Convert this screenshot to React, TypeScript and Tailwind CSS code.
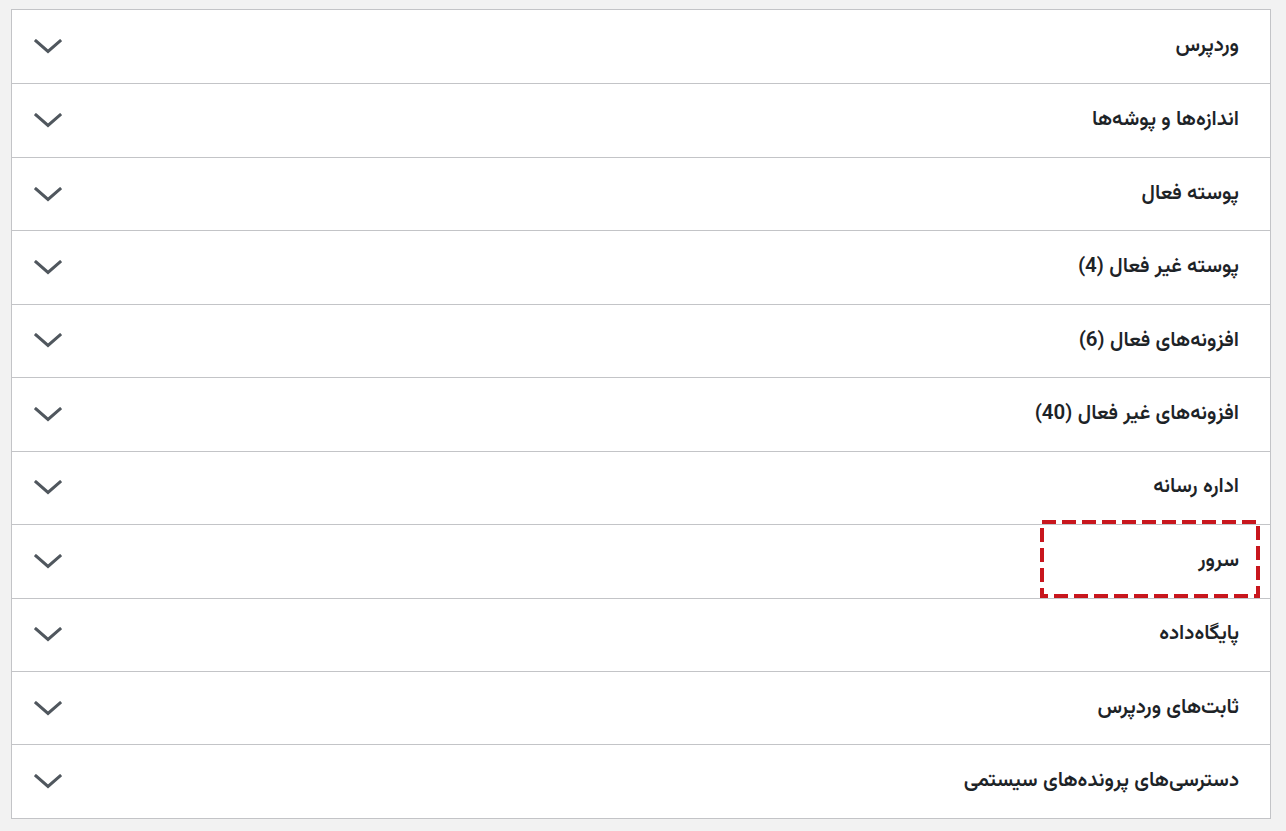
import React from "react";

const items = [
  "وردپرس",
  "اندازه‌ها و پوشه‌ها",
  "پوسته فعال",
  "پوسته غیر فعال (4)",
  "افزونه‌های فعال (6)",
  "افزونه‌های غیر فعال (40)",
  "اداره رسانه",
  "سرور",
  "پایگاه‌داده",
  "ثابت‌های وردپرس",
  "دسترسی‌های پرونده‌های سیستمی",
];

function Chevron() {
  return (
    <svg width="28" height="15" viewBox="0 0 28 15" fill="none">
      <path d="M2 2 L14 12.5 L26 2" stroke="#50575e" strokeWidth="3" strokeLinecap="square" strokeLinejoin="miter" />
    </svg>
  );
}

function DashedBox() {
  return (
    <svg className="pointer-events-none absolute right-[10px] top-[-5px]" width="220" height="78" viewBox="0 0 220 78" fill="none">
      <rect x="2" y="2" width="216" height="74" stroke="#c8161d" strokeWidth="4" strokeDasharray="14 6" />
    </svg>
  );
}

export default function App() {
  return (
    <div
      className="min-h-[831px] w-full bg-[#f2f2f2] pt-[9px] pl-[11px] pr-[15px] pb-[13px]"
      style={{ fontFamily: '"Vazirmatn", "Noto Sans Arabic", "DejaVu Sans", sans-serif' }}
    >
      <div dir="rtl" className="border border-[#c3c4c7] bg-white">
        {items.map((t, i) => (
          <div
            key={i}
            className={`relative flex h-[73.45px] items-center justify-between pr-[31px] pl-[22px] ${i > 0 ? "border-t border-[#c3c4c7]" : ""}`}
          >
            <span className="text-[20.5px] font-semibold text-[#1d2327]">{t}</span>
            <Chevron />
            {t === "سرور" && <DashedBox />}
          </div>
        ))}
      </div>
    </div>
  );
}
